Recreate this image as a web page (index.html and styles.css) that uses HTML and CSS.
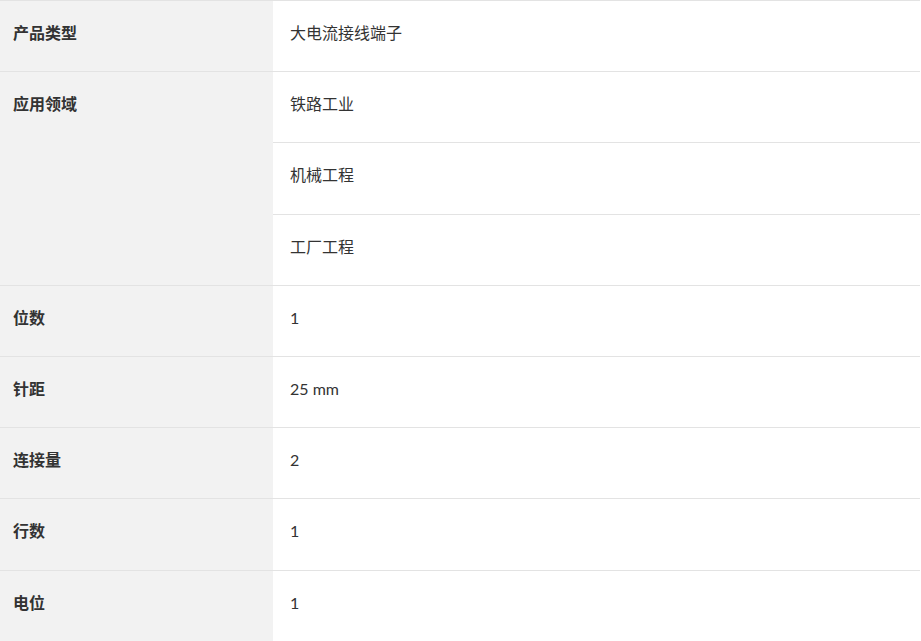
FILE: index.html
```html
<!DOCTYPE html>
<html lang="zh-CN">
<head>
  <meta charset="UTF-8">
  <title>产品参数</title>
  <link rel="stylesheet" href="styles.css">
</head>
<body>
  <div class="specs">
    <div class="spec-row">
      <div class="spec-label">产品类型</div>
      <div class="spec-values">
        <div class="spec-value">大电流接线端子</div>
      </div>
    </div>
    <div class="spec-row">
      <div class="spec-label">应用领域</div>
      <div class="spec-values">
        <div class="spec-value">铁路工业</div>
        <div class="spec-value">机械工程</div>
        <div class="spec-value">工厂工程</div>
      </div>
    </div>
    <div class="spec-row">
      <div class="spec-label">位数</div>
      <div class="spec-values">
        <div class="spec-value">1</div>
      </div>
    </div>
    <div class="spec-row">
      <div class="spec-label">针距</div>
      <div class="spec-values">
        <div class="spec-value">25 mm</div>
      </div>
    </div>
    <div class="spec-row">
      <div class="spec-label">连接量</div>
      <div class="spec-values">
        <div class="spec-value">2</div>
      </div>
    </div>
    <div class="spec-row">
      <div class="spec-label">行数</div>
      <div class="spec-values">
        <div class="spec-value">1</div>
      </div>
    </div>
    <div class="spec-row">
      <div class="spec-label">电位</div>
      <div class="spec-values">
        <div class="spec-value">1</div>
      </div>
    </div>
  </div>
</body>
</html>
```

FILE: styles.css
```css
body {
  margin: 0;
  font-family: Lato, "Noto Sans CJK SC", sans-serif;
  font-size: 16px;
  color: #333333;
  background: #ffffff;
}

.specs {
  width: 920px;
}

.spec-row {
  display: flex;
  border-top: 1px solid #e3e3e3;
}

/* 左侧标题列 */
.spec-label {
  width: 273px;
  flex-shrink: 0;
  box-sizing: border-box;
  padding: 19px 13px 26.2px;
  line-height: 25px;
  font-weight: bold;
  background-color: #f2f2f2;
}

.spec-values {
  flex: 1;
}

.spec-value {
  padding: 19px 17px 26.2px;
  line-height: 25px;
}

.spec-value + .spec-value {
  border-top: 1px solid #e3e3e3;
}
```
